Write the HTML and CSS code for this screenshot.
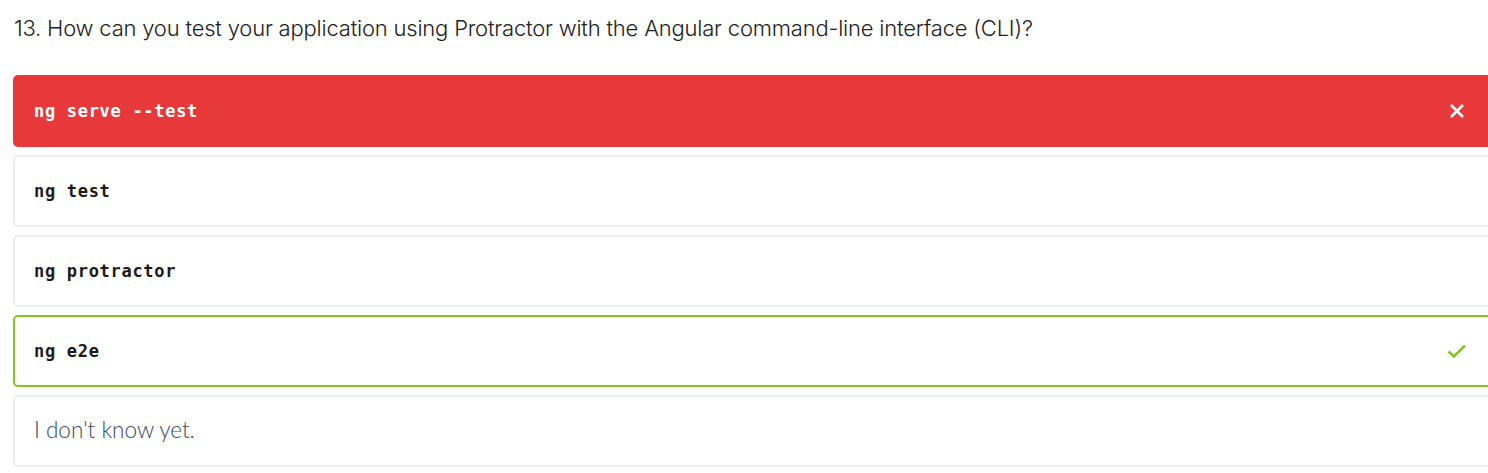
FILE: index.html
```html
<!DOCTYPE html>
<html lang="en">
<head>
<meta charset="utf-8">
<title>Quiz</title>
<link rel="stylesheet" href="styles.css">
</head>
<body>
<div class="quiz">
  <h2 class="question">13. How can you test your application using Protractor with the Angular command-line interface (CLI)?</h2>
  <ul class="answers">
    <li class="answer wrong">
      <code>ng serve --test</code>
      <svg class="icon" width="16" height="16" viewBox="0 0 16 16"><path d="M2 2 L14 14 M14 2 L2 14" stroke="#fff" stroke-width="2.6" fill="none"/></svg>
    </li>
    <li class="answer"><code>ng test</code></li>
    <li class="answer"><code>ng protractor</code></li>
    <li class="answer correct">
      <code>ng e2e</code>
      <svg class="icon" width="20" height="16" viewBox="0 0 20 16"><path d="M1.5 8.5 L7 13.5 L18 2.5" stroke="#84c525" stroke-width="2.6" fill="none"/></svg>
    </li>
    <li class="answer plain">I don't know yet.</li>
  </ul>
</div>
</body>
</html>
```
FILE: styles.css
```css
html, body {
  margin: 0;
  padding: 0;
  background: #fff;
  overflow: hidden;
}
.quiz {
  padding: 13px 0 0 13px;
  width: 1489px;
}
.question {
  margin: 0 0 32px 1px;
  font-family: "Inter", "Roboto", sans-serif;
  font-weight: 300;
  font-size: 22px;
  line-height: 30px;
  color: #222;
  letter-spacing: -0.2px;
}
.answers {
  list-style: none;
  margin: 0;
  padding: 0;
  display: flex;
  flex-direction: column;
  gap: 8px;
}
.answer {
  box-sizing: border-box;
  height: 72px;
  border: 2px solid #eeeeee;
  border-radius: 5px;
  display: flex;
  align-items: center;
  justify-content: space-between;
  padding: 0 0 0 19px;
  background: #fff;
}
.answer code {
  font-family: "DejaVu Sans Mono", "Liberation Mono", monospace;
  font-weight: bold;
  font-size: 17px;
  color: #1a1a1a;
  letter-spacing: 0.7px;
}
.answer .icon {
  margin-right: 35px;
}
.wrong {
  background: #e8393a;
  border-color: #e8393a;
}
.wrong code {
  color: #fff;
}
.correct {
  border-color: #84c525;
}
.correct .icon {
  margin-right: 33px;
}
.plain {
  font-family: "Lato", sans-serif;
  font-weight: 300;
  font-size: 22.5px;
  color: #34495e;
  padding-bottom: 4px;
}
```
